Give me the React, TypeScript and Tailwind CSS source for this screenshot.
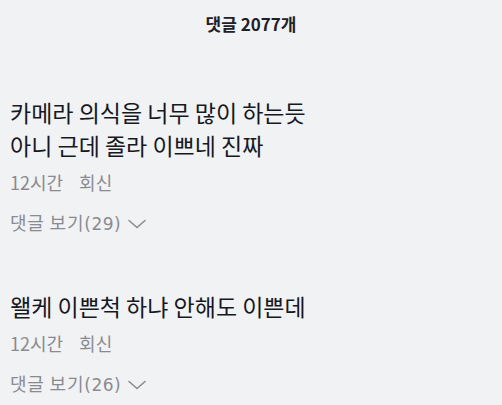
const comments = [
  { lines: ['카메라 의식을 너무 많이 하는듯', '아니 근데 졸라 이쁘네 진짜'], time: '12시간', replies: 29 },
  { lines: ['왤케 이쁜척 하냐 안해도 이쁜데'], time: '12시간', replies: 26 },
];

const App = () => {
  return (
    <div className="w-[502px] h-[405px] overflow-hidden bg-[#f1f2f3] font-['Noto_Sans_CJK_KR','Noto_Sans',sans-serif]">
      <div className="pt-[12px] text-center text-[17px] font-bold text-[#1f2029] leading-[24px]">
        댓글 2077개
      </div>
      <div className="px-[10px] pt-[60px] flex flex-col gap-[54px]">
        {comments.map((c, i) => (
          <div key={i}>
            <div className="text-[23px] leading-[33px] text-[#161823]">
              {c.lines.map((l, j) => (
                <div key={j}>{l}</div>
              ))}
            </div>
            <div className="mt-[8px] flex gap-[16px] text-[18px] leading-[24px] text-[#8a8b91]">
              <span>{c.time}</span>
              <span>회신</span>
            </div>
            <div className="mt-[16px] flex items-center gap-[7px] text-[18px] leading-[24px] text-[#8a8b91]">
              <span className="tracking-[0.8px]">
                댓글 보기<span className="font-['DejaVu_Sans',sans-serif] text-[17px] tracking-[0.5px]">({c.replies})</span>
              </span>
              <svg width="18" height="10" viewBox="0 0 18 10" fill="none" className="mt-[2px]">
                <path d="M1 1.5 9 8.5 17 1.5" stroke="#8a8b91" strokeWidth="1.6" strokeLinecap="round" strokeLinejoin="round" />
              </svg>
            </div>
          </div>
        ))}
      </div>
    </div>
  );
};

export default App;
